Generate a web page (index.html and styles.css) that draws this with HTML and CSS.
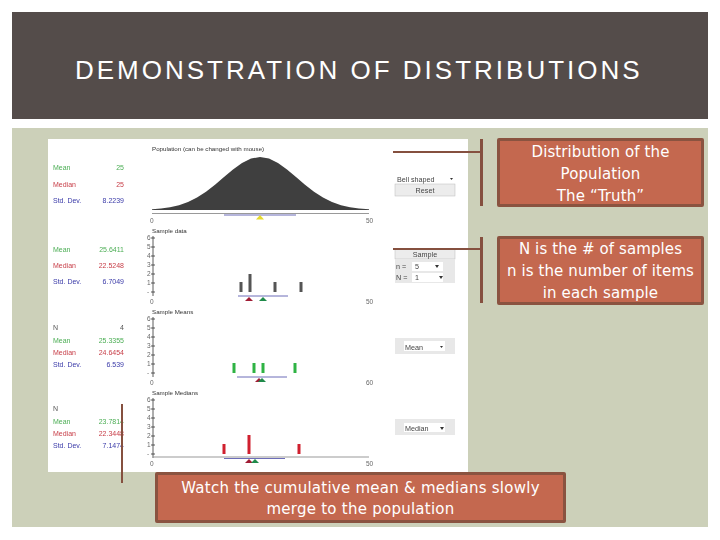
FILE: index.html
```html
<!DOCTYPE html>
<html lang="en">

<head>
  <meta charset="UTF-8">
  <title>Demonstration of Distributions</title>
  <link rel="stylesheet" href="styles.css">
</head>

<body>
  <div class="slide">
    <div class="header">
      <h1>DEMONSTRATION OF DISTRIBUTIONS</h1>
    </div>
    <div class="panel">
      <svg class="applet" viewBox="48 139 420 333" width="420" height="333">
        <defs>
          <g id="axis">
            <path class="axis" d="M153 236V296M151 238H155M151 247H155M151 256H155M151 265H155M151 274H155M151 283H155M151 292H155"/>
            <text class="tick" x="147" y="240">6</text>
            <text class="tick" x="147" y="249">5</text>
            <text class="tick" x="147" y="258">4</text>
            <text class="tick" x="147" y="267">3</text>
            <text class="tick" x="147" y="276">2</text>
            <text class="tick" x="147" y="285">1</text>
            <text class="tick" x="147" y="294">-</text>
          </g>
        </defs>

        <!-- stats -->
        <text class="stat green" x="53" y="170">Mean</text>
        <text class="stat green end" x="124" y="170">25</text>
        <text class="stat red" x="53" y="187">Median</text>
        <text class="stat red end" x="124" y="187">25</text>
        <text class="stat blue" x="53" y="203">Std. Dev.</text>
        <text class="stat blue end" x="124" y="203">8.2239</text>

        <text class="stat green" x="53" y="252">Mean</text>
        <text class="stat green end" x="124" y="252">25.6411</text>
        <text class="stat red" x="53" y="268">Median</text>
        <text class="stat red end" x="124" y="268">22.5248</text>
        <text class="stat blue" x="53" y="284">Std. Dev.</text>
        <text class="stat blue end" x="124" y="284">6.7049</text>

        <text class="stat gray" x="53" y="330">N</text>
        <text class="stat gray end" x="124" y="330">4</text>
        <text class="stat green" x="53" y="343">Mean</text>
        <text class="stat green end" x="124" y="343">25.3355</text>
        <text class="stat red" x="53" y="355">Median</text>
        <text class="stat red end" x="124" y="355">24.6454</text>
        <text class="stat blue" x="53" y="367">Std. Dev.</text>
        <text class="stat blue end" x="124" y="367">6.539</text>

        <text class="stat gray" x="53" y="411">N</text>
        <text class="stat green" x="53" y="424">Mean</text>
        <text class="stat green end" x="124" y="424">23.7814</text>
        <text class="stat red" x="53" y="436">Median</text>
        <text class="stat red end" x="124" y="436">22.3448</text>
        <text class="stat blue" x="53" y="448">Std. Dev.</text>
        <text class="stat blue end" x="124" y="448">7.1474</text>

        <!-- population -->
        <text class="label" x="152" y="151">Population (can be changed with mouse)</text>
        <polygon class="bell" points="152,210 152,209.3 161,208.5 170,207.3 179,205.2 188,202 197,197.6 206,191.7 215,184.7 224,177 233,169.4 242,162.9 251,158.6 260,157 269,158.6 278,162.9 287,169.4 296,177 305,184.7 314,191.7 323,197.6 332,202 341,205.2 350,207.3 359,208.5 369,209.3 369,210"/>
        <path class="rule" d="M152 213.5H369"/>
        <path class="mean-line" d="M224 215H296"/>
        <polygon class="mark-yellow" points="260,215 264,219.5 256,219.5"/>
        <text class="tick" x="150" y="223">0</text>
        <text class="tick" x="366" y="223">50</text>

        <!-- sample data -->
        <text class="label" x="152" y="233">Sample data</text>
        <use href="#axis"/>
        <path class="bar-gray" d="M241 282V292M250 274V292M275 282V292M301 282V292"/>
        <path class="mean-line" d="M238 296H288"/>
        <polygon class="mark-red" points="249,297 253,301 245,301"/>
        <polygon class="mark-green" points="263,297 267,301 259,301"/>
        <text class="tick" x="150" y="304">0</text>
        <text class="tick" x="366" y="304">50</text>

        <!-- sample means -->
        <text class="label" x="152" y="314">Sample Means</text>
        <use href="#axis" y="81"/>
        <path class="bar-green" d="M234 363V373M254 363V373M263 363V373M295 363V373"/>
        <path class="mean-line" d="M237 377H287"/>
        <polygon class="mark-red" points="259,378 263,382 255,382"/>
        <polygon class="mark-green" points="262,378 266,382 258,382"/>
        <text class="tick" x="150" y="385">0</text>
        <text class="tick" x="366" y="385">60</text>

        <!-- sample medians -->
        <text class="label" x="152" y="395">Sample Medians</text>
        <use href="#axis" y="162"/>
        <path class="bar-red" d="M224 444V454M249 435V454M299 444V454"/>
        <path class="rule" d="M153 457H369"/>
        <path class="mean-line" d="M224 458.5H285"/>
        <polygon class="mark-red" points="249,459 253,463 245,463"/>
        <polygon class="mark-green" points="255,459 259,463 251,463"/>
        <text class="tick" x="150" y="466">0</text>
        <text class="tick" x="366" y="466">50</text>

        <!-- controls -->
        <rect class="field" x="395" y="173" width="60" height="11"/>
        <text class="control" x="397" y="182">Bell shaped</text>
        <polygon class="caret" points="450,178 453,178 451.500,180"/>
        <rect class="button" x="395" y="184" width="60" height="12"/>
        <text class="control mid" x="425" y="193">Reset</text>

        <rect class="button" x="395" y="249" width="60" height="10"/>
        <text class="control mid" x="425" y="257">Sample</text>
        <rect class="box" x="395" y="259" width="60" height="24"/>
        <text class="control" x="396" y="269">n =</text>
        <rect class="field" x="412" y="262" width="31" height="9"/>
        <text class="control" x="415" y="269">5</text>
        <polygon class="caret" points="435,265 439,265 437,268"/>
        <text class="control" x="396" y="280">N =</text>
        <rect class="field" x="412" y="273" width="31" height="9"/>
        <text class="control" x="415" y="280">1</text>
        <polygon class="caret" points="439,276 443,276 441,279"/>

        <rect class="box" x="395" y="338" width="60" height="16"/>
        <rect class="field" x="404" y="341" width="41" height="10"/>
        <text class="control" x="405" y="350">Mean</text>
        <polygon class="caret" points="440,346 443,346 441.500,348"/>

        <rect class="box" x="395" y="419" width="60" height="16"/>
        <rect class="field" x="404" y="423" width="41" height="9"/>
        <text class="control" x="405" y="431">Median</text>
        <polygon class="caret" points="440,427 444,427 442,430"/>
      </svg>

      <!-- connectors and callouts sit over the applet -->
      <span class="bracket bracket-one"></span>
      <span class="bracket bracket-two"></span>
      <span class="stem"></span>

      <div class="callout callout-one">Distribution of the<br>Population<br>The “Truth”</div>
      <div class="callout callout-two">N is the # of samples<br>n is the number of items<br>in each sample</div>
      <div class="callout callout-three">Watch the cumulative mean &amp; medians slowly<br>merge to the population</div>
    </div>
  </div>
</body>

</html>
```

FILE: styles.css
```css
* {
  padding: 0;
  margin: 0;
  box-sizing: border-box;
}

body {
  width: 720px;
  height: 540px;
  background: #fff;
  overflow: hidden;
  font-family: "Liberation Sans", Arial, sans-serif;
}

.slide {
  display: flex;
  flex-direction: column;
  gap: 9px;
  padding: 12px;
}

.header {
  height: 107px;
  padding: 42px 0 0 63px;
  background: #544c4a;
}

.header h1 {
  font-size: 26px;
  line-height: 32px;
  font-weight: normal;
  letter-spacing: 3px;
  color: #fff;
  white-space: nowrap;
}

.panel {
  position: relative;
  height: 399px;
  padding: 11px 0 0 36px;
  background: #ccd0b9;
}

.applet {
  display: block;
  background: #fff;
  filter: blur(0.35px);
}

/* applet text */
.stat {
  font-size: 7px;
}

.end {
  text-anchor: end;
}

.mid {
  text-anchor: middle;
}

.green {
  fill: #4cae55;
}

.red {
  fill: #c8404a;
}

.blue {
  fill: #3a3aa8;
}

.gray {
  fill: #555;
}

.label {
  font-size: 6.2px;
  fill: #333;
}

.tick {
  font-size: 6.5px;
  fill: #666;
}

.control {
  font-size: 7.200px;
  fill: #444;
}

/* applet shapes */
.bell {
  fill: #3f3f3f;
}

.axis {
  fill: none;
  stroke: #333;
  stroke-width: 0.8;
}

.rule {
  fill: none;
  stroke: #999;
  stroke-width: 1.2;
}

.mean-line {
  fill: none;
  stroke: #6d6db8;
  stroke-width: 1;
}

.bar-gray,
.bar-green,
.bar-red {
  fill: none;
  stroke-width: 3;
}

.bar-gray {
  stroke: #555;
}

.bar-green {
  stroke: #2fb344;
}

.bar-red {
  stroke: #d0202f;
}

.mark-yellow {
  fill: #e6d92e;
}

.mark-red {
  fill: #a01c34;
}

.mark-green {
  fill: #1f8a4a;
}

.field {
  fill: #fff;
}

.button {
  fill: #ececec;
  stroke: #bbb;
  stroke-width: 0.5;
}

.box {
  fill: #e8e8e8;
}

.caret {
  fill: #333;
}

/* callouts */
.bracket {
  position: absolute;
  left: 381px;
  width: 90px;
  border-right: 3px solid #85503f;
}

.bracket::before {
  content: "";
  position: absolute;
  left: 0;
  right: 0;
  height: 2px;
  background: #85503f;
}

.bracket-one {
  top: 11px;
  height: 67px;
}

.bracket-one::before {
  top: 12px;
}

.bracket-two {
  top: 109px;
  height: 66px;
}

.bracket-two::before {
  top: 11px;
}

.stem {
  position: absolute;
  left: 109px;
  top: 276px;
  width: 2px;
  height: 79px;
  background: #85503f;
}

.callout {
  position: absolute;
  display: flex;
  align-items: center;
  justify-content: center;
  border: 3px solid #8a5340;
  border-radius: 2px;
  background: #c4684f;
  color: #fff;
  font-family: "DejaVu Sans", sans-serif;
  font-size: 15px;
  line-height: 22px;
  letter-spacing: 0.1px;
  text-align: center;
  white-space: nowrap;
}

.callout-one {
  left: 485px;
  top: 10px;
  width: 207px;
  height: 69px;
  padding-top: 3px;
}

.callout-two {
  left: 485px;
  top: 108px;
  width: 207px;
  height: 69px;
  padding-top: 1px;
}

.callout-three {
  left: 143px;
  top: 344px;
  width: 411px;
  height: 51px;
  padding-top: 2px;
  line-height: 21px;
  letter-spacing: 0.25px;
}
```
